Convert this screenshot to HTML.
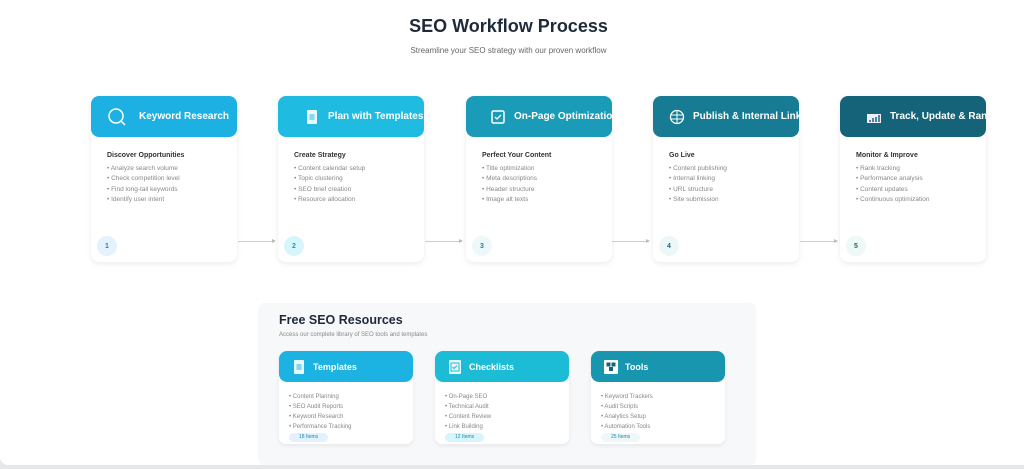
<!DOCTYPE html>
<html><head><meta charset="utf-8"><style>
*{box-sizing:border-box;margin:0;padding:0}
body{width:1024px;height:469px;background:#e6e7e9;font-family:"Liberation Sans",sans-serif;position:relative;overflow:hidden}
.page{position:absolute;left:0;top:0;width:1024px;height:465px;background:#fff;border-radius:0 0 0 8px}
h1{position:absolute;left:0;width:1017px;text-align:center;top:16px;font-size:18px;color:#1e2a3a;font-weight:bold}
.sub{position:absolute;left:0;width:1017px;text-align:center;top:46px;font-size:8px;color:#666}
.card{position:absolute;top:96px;width:146px;height:166px;background:#fff;border-radius:8px;box-shadow:0 2px 6px rgba(0,0,0,.08)}
.hd{height:41px;border-radius:8px;color:#fff;font-weight:bold;font-size:10px;display:flex;align-items:center;white-space:nowrap;overflow:hidden;padding-left:16px;gap:8px}
.bd{padding:14px 16px 0 16px;font-size:6.5px;color:#888;line-height:10.5px}
.bd b{display:block;color:#333;font-size:7px;margin-bottom:2px}
.num{position:absolute;left:6px;top:140px;width:20px;height:20px;border-radius:50%;font-size:7px;font-weight:bold;display:flex;align-items:center;justify-content:center}
.arr{position:absolute;top:241px;height:1px;background:#ccc;width:36px}
.arr:after{content:"";position:absolute;right:-2px;top:-2px;border-left:4px solid #bbb;border-top:2.5px solid transparent;border-bottom:2.5px solid transparent}
.panel{position:absolute;left:258px;top:303px;width:498px;height:162px;background:#f6f8fa;border-radius:6px}
.panel h2{position:absolute;left:21px;top:10px;font-size:12.5px;color:#1e2a3a}
.panel .ps{position:absolute;left:21px;top:29px;font-size:6px;color:#888}
.rc{position:absolute;top:48px;width:134px;height:93px;background:#fff;border-radius:7px;box-shadow:0 2px 5px rgba(0,0,0,.07)}
.rc .hd{height:31px;font-size:9px;padding-left:12px;gap:6px}
.rc ul{list-style:none;padding:10px 10px 0;font-size:6px;color:#888;line-height:10px}
.pill{position:absolute;left:10px;top:82px;height:9px;padding:0 10px;border-radius:5px;font-size:5px;line-height:9px;color:#1a8ab0}
.ic{width:16px;height:16px;flex:none}
</style></head><body><div class="page">
<h1>SEO Workflow Process</h1>
<div class="sub">Streamline your SEO strategy with our proven workflow</div>

<div class="card" style="left:91px"><div class="hd" style="background:#1db0e2"><svg class="ic" style="width:20px;height:20px" viewBox="0 0 20 20"><circle cx="9" cy="9" r="7" fill="none" stroke="#fff" stroke-width="1.5"/><path d="M14 14l4 4" stroke="#fff" stroke-width="1.5"/></svg><span style="margin-left:4px">Keyword Research</span></div>
<div class="bd"><b>Discover Opportunities</b>• Analyze search volume<br>• Check competition level<br>• Find long-tail keywords<br>• Identify user intent</div><div class="num" style="background:#e3f2fc;color:#1a8ac0">1</div></div>
<div class="arr" style="left:238px"></div>

<div class="card" style="left:278px"><div class="hd" style="background:#1fbbe0;padding-left:26px"><svg class="ic" viewBox="0 0 16 16"><rect x="3" y="1" width="10" height="14" rx="1" fill="#e8f8fc"/><path d="M5.5 6h5M5.5 8h5M5.5 10h5" stroke="#1fbbe0"/></svg>Plan with Templates</div>
<div class="bd"><b>Create Strategy</b>• Content calendar setup<br>• Topic clustering<br>• SEO brief creation<br>• Resource allocation</div><div class="num" style="background:#d6f6fb;color:#1a9ab8">2</div></div>
<div class="arr" style="left:425px"></div>

<div class="card" style="left:466px"><div class="hd" style="background:#1a9cb8;padding-left:24px"><svg class="ic" viewBox="0 0 16 16"><rect x="2" y="2" width="12" height="12" rx="1.5" fill="none" stroke="#fff" stroke-width="1.5"/><path d="M5 8l2 2 4-4" stroke="#fff" stroke-width="1.3" fill="none"/></svg>On-Page Optimization</div>
<div class="bd"><b>Perfect Your Content</b>• Title optimization<br>• Meta descriptions<br>• Header structure<br>• Image alt texts</div><div class="num" style="background:#eef8fa;color:#1a7f98">3</div></div>
<div class="arr" style="left:612px"></div>

<div class="card" style="left:653px"><div class="hd" style="background:#177b93"><svg class="ic" viewBox="0 0 16 16"><circle cx="8" cy="8" r="6.5" fill="none" stroke="#fff" stroke-width="1.3"/><path d="M2 6h12M2 10h12M8 1.5v13" stroke="#fff" stroke-width="1"/></svg>Publish &amp; Internal Linking</div>
<div class="bd"><b>Go Live</b>• Content publishing<br>• Internal linking<br>• URL structure<br>• Site submission</div><div class="num" style="background:#eef7f8;color:#1a6a80">4</div></div>
<div class="arr" style="left:800px"></div>

<div class="card" style="left:840px"><div class="hd" style="background:#156378;padding-left:26px"><svg class="ic" viewBox="0 0 16 16"><rect x="1" y="5" width="14" height="9" fill="#eef"/><path d="M4 13v-2M7 13v-4M10 13v-5M13 13v-7" stroke="#156378" stroke-width="1.5"/></svg>Track, Update &amp; Rank</div>
<div class="bd"><b>Monitor &amp; Improve</b>• Rank tracking<br>• Performance analysis<br>• Content updates<br>• Continuous optimization</div><div class="num" style="background:#eef8f6;color:#1a6a6a">5</div></div>

<div class="panel"><h2>Free SEO Resources</h2><div class="ps">Access our complete library of SEO tools and templates</div>
<div class="rc" style="left:21px"><div class="hd" style="background:#1cb2e2"><svg class="ic" viewBox="0 0 16 16"><rect x="3" y="1" width="10" height="14" rx="1" fill="#e8f8fc"/><path d="M5.5 6h5M5.5 8h5M5.5 10h5" stroke="#1cb2e2"/></svg>Templates</div><ul><li>• Content Planning</li><li>• SEO Audit Reports</li><li>• Keyword Research</li><li>• Performance Tracking</li></ul><div class="pill" style="background:#e2f1fb">18 Items</div></div>
<div class="rc" style="left:177px"><div class="hd" style="background:#1cbcd6"><svg class="ic" viewBox="0 0 16 16"><rect x="2" y="1" width="12" height="14" rx="1" fill="#e8f8fc"/><rect x="4" y="4" width="8" height="8" fill="none" stroke="#1cbcd6"/><path d="M5.5 8l1.5 1.5 3-3" stroke="#1cbcd6" fill="none"/></svg>Checklists</div><ul><li>• On-Page SEO</li><li>• Technical Audit</li><li>• Content Review</li><li>• Link Building</li></ul><div class="pill" style="background:#d6f6fb">12 Items</div></div>
<div class="rc" style="left:333px"><div class="hd" style="background:#1896b0"><svg class="ic" viewBox="0 0 16 16"><rect x="1" y="1" width="14" height="14" rx="1" fill="#fff"/><rect x="3.5" y="3.5" width="4" height="4" fill="#156378"/><rect x="8.5" y="3.5" width="4" height="4" fill="#156378"/><rect x="6" y="8" width="4" height="4" fill="#156378"/></svg>Tools</div><ul><li>• Keyword Trackers</li><li>• Audit Scripts</li><li>• Analytics Setup</li><li>• Automation Tools</li></ul><div class="pill" style="background:#eef8f8">25 Items</div></div>
</div>
</div></body></html>
